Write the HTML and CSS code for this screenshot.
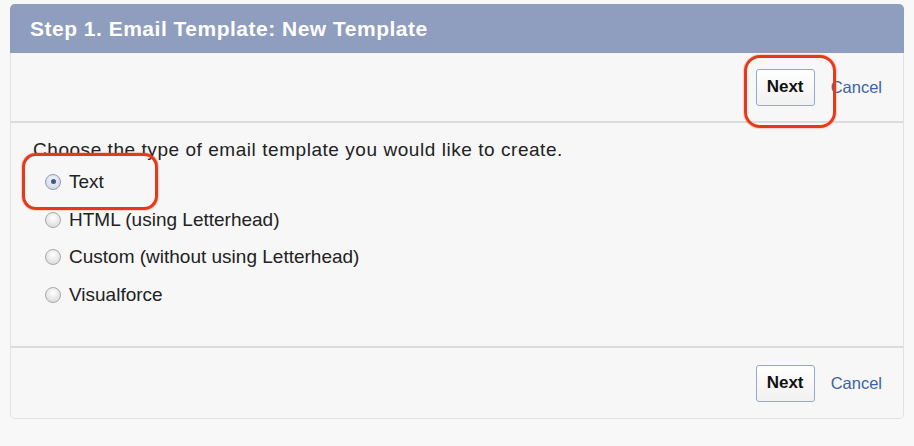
FILE: index.html
```html
<!DOCTYPE html>
<html>
<head>
<meta charset="utf-8">
<link rel="stylesheet" href="styles.css">
</head>
<body>
<div class="panel">
  <div class="header">Step 1. Email Template: New Template</div>
  <div class="buttons top">
    <span class="btn">Next</span>
    <a class="cancel">Cancel</a>
    <span class="mark mark-next"></span>
  </div>
  <div class="content">
    <p class="prompt">Choose the type of email template you would like to create.</p>
    <div class="options">
      <label class="opt"><span class="radio checked"></span>Text<span class="mark mark-text"></span></label>
      <label class="opt"><span class="radio"></span>HTML (using Letterhead)</label>
      <label class="opt"><span class="radio"></span>Custom (without using Letterhead)</label>
      <label class="opt"><span class="radio"></span>Visualforce</label>
    </div>
  </div>
  <div class="buttons bottom">
    <span class="btn">Next</span>
    <a class="cancel">Cancel</a>
  </div>
</div>
</body>
</html>
```
FILE: styles.css
```css
html, body {
  margin: 0;
  padding: 0;
  background: #f8f8f8;
  font-family: "Liberation Sans", Arial, sans-serif;
}
body {
  padding: 4px 9px 0 10px;
}
.panel {
  width: 894px;
  background: #f7f7f7;
  border: 1px solid #e2e2e2;
  border-top: none;
  border-radius: 5px;
  box-sizing: border-box;
}
.header {
  height: 49px;
  background: #8f9dbf;
  border-radius: 5px 5px 0 0;
  color: #fff;
  font-weight: bold;
  font-size: 21px;
  letter-spacing: 0.5px;
  line-height: 49px;
  padding-left: 20px;
  margin: 0 -1px;
}
.buttons {
  position: relative;
  display: flex;
  justify-content: flex-end;
  align-items: center;
  gap: 16px;
  padding-right: 21px;
}
.buttons.top {
  height: 68px;
  border-bottom: 2px solid #dcdcdc;
}
.buttons.bottom {
  height: 70px;
  border-top: 2px solid #dcdcdc;
}
.btn {
  box-sizing: border-box;
  width: 59px;
  height: 37px;
  display: flex;
  align-items: center;
  justify-content: center;
  border: 1px solid #9aa8c8;
  border-radius: 3px;
  background: linear-gradient(#ffffff, #f1f1f1);
  font-weight: bold;
  font-size: 17px;
  color: #111;
}
.cancel {
  font-size: 16.5px;
  color: #3e639d;
}
.content {
  padding: 17px 0 28px 22px;
  height: 178px;
  box-sizing: content-box;
}
.prompt {
  margin: 0;
  font-size: 19px;
  letter-spacing: 0.55px;
  color: #222;
  line-height: 20px;
}
.options {
  display: flex;
  flex-direction: column;
  margin-top: 3px;
}
.opt {
  position: relative;
  display: flex;
  align-items: center;
  height: 37.7px;
  font-size: 19px;
  color: #222;
  padding-left: 12px;
}
.radio {
  box-sizing: border-box;
  width: 16px;
  height: 16px;
  border-radius: 50%;
  border: 1px solid #a8a8a8;
  background: radial-gradient(circle at 50% 35%, #ffffff, #d4d4d4);
  margin-right: 8px;
  position: relative;
}
.radio.checked {
  border-color: #8d9ab8;
  background: radial-gradient(circle at 50% 35%, #f4f6fb, #c9d0e0);
}
.radio.checked::after {
  content: "";
  position: absolute;
  left: 4.5px;
  top: 4.5px;
  width: 5px;
  height: 5px;
  border-radius: 50%;
  background: #3f5a8a;
}
.mark {
  position: absolute;
  border: 3px solid #e6391a;
  box-shadow: 0 0 1.5px #e6391a;
}
.mark-next {
  right: 67px;
  top: 2px;
  width: 86px;
  height: 67px;
  border-radius: 16px;
}
.mark-text {
  left: -11px;
  top: -10px;
  width: 130px;
  height: 51px;
  border-radius: 14px;
}
```
